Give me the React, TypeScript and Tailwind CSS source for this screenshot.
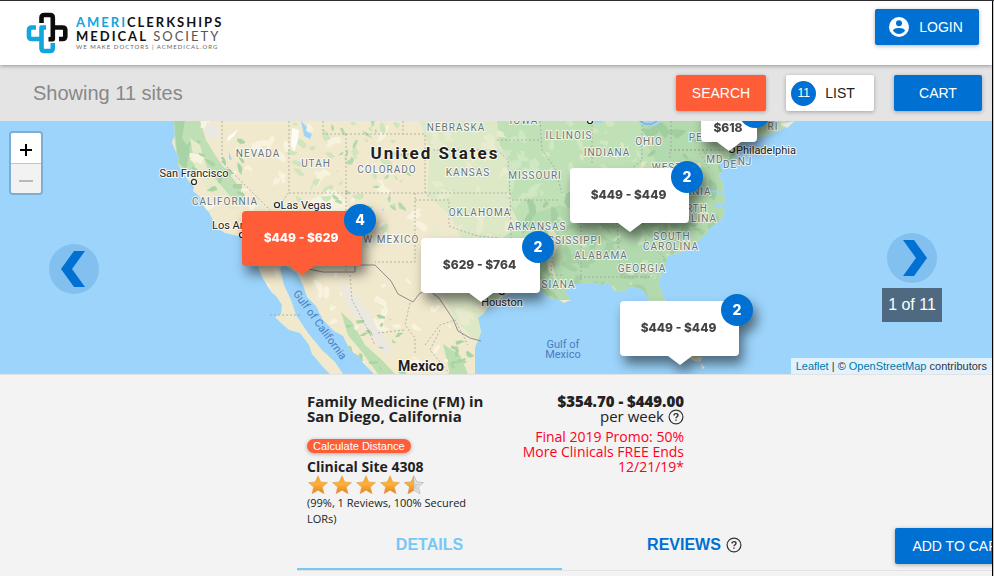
import React from "react";

type Pt = [number, number];

/* Small seeded generator so that the terrain texture is the same on every render. */
function makeRandom(seed: number) {
  let s = seed;
  return () => {
    s = (s * 1664525 + 1013904223) % 4294967296;
    return s / 4294967296;
  };
}

function patches(seed: number, count: number, x: number, y: number, w: number, h: number, size: number) {
  const rnd = makeRandom(seed);
  const out: string[] = [];
  for (let i = 0; i < count; i++) {
    const cx = x + rnd() * w;
    const cy = y + rnd() * h;
    const r = size * (0.4 + rnd());
    const tilt = rnd() * Math.PI;
    const n = 8;
    const pts: Pt[] = [];
    for (let k = 0; k < n; k++) {
      const a = (k / n) * Math.PI * 2;
      const q = r * (0.45 + rnd() * 0.8);
      const px = Math.cos(a) * q;
      const py = Math.sin(a) * q * 0.5;
      pts.push([cx + px * Math.cos(tilt) - py * Math.sin(tilt), cy + px * Math.sin(tilt) + py * Math.cos(tilt)]);
    }
    out.push("M" + pts.map((p) => p[0].toFixed(1) + " " + p[1].toFixed(1)).join("L") + "Z");
  }
  return out.join("");
}

const LAND =
  "M174 121L175 135L172 142L175 150L179 157L178 165L183 173L188 180L194 187L193 191L200 197L202 204L208 211L213 220L217 228L225 233L234 235L242 237L248 246L254 256L262 277L272 293L276 296L282 305L281 314L275 317L281 323L289 330L300 333L309 345L312 354L323 367L330 374L343 374L335 362L322 350L308 333L296 315L291 300L284 285L280 268L284 265L297 273L303 285L307 297L316 306L323 320L334 331L343 336L350 350L358 356L365 365L374 374L475 374L475 348L481 332L478 318L484 313L491 303L500 299L512 292L530 289L541 290L549 298L558 299L564 303L571 300L564 292L570 288L566 286L575 284L586 284L592 282L602 285L608 282L614 290L622 292L632 286L643 290L650 301L657 325L675 352L697 362L701 356L690 345L672 315L665 301L660 288L660 278L666 262L667 256L675 254L688 250L698 241L706 234L710 228L722 219L725 210L721 207L725 202L723 194L724 184L719 176L726 165L735 156L738 146L744 139L757 136L766 134L783 128L785 121Z";

const STATE_LINES =
  "M222 121V162L270 210M289 121V192L281 204V224M289 193H425M346 134V193M346 193V271M323 121V134H425V193M403 121V134M425 150H497M425 193H510M415 193V262H375M415 200H449V226L462 231L478 236L500 238M510 193L511 239M497 150L508 160L510 193M497 140H540M512 200H560M511 239H548M553 245L551 275M548 275H562M581 210V283M616 210L620 270M580 277H655M540 121L542 150L555 168L562 193M592 121V165M642 121V160L632 168M670 158V150H712M640 218L700 206M700 153L710 170M671 121V150H727M645 240L665 258M350 275L352 300L367 328L375 345M410 303L405 325L415 338V355M378 333L405 330M425 345L440 325L455 320L468 345M270 315H300M440 330L430 350L450 374";

const BORDER = "M304 268L323 272H355V265H375L391 281L398 294L413 302L420 293L430 291L439 298L453 319L458 331L470 338L481 341";

type Label = { x: number; y: number; t: string };

const STATES: Label[] = [
  { x: 258, y: 157, t: "NEVADA" },
  { x: 316, y: 167, t: "UTAH" },
  { x: 387, y: 173, t: "COLORADO" },
  { x: 456, y: 131, t: "NEBRASKA" },
  { x: 468, y: 176, t: "KANSAS" },
  { x: 524, y: 124, t: "IOWA" },
  { x: 535, y: 179, t: "MISSOURI" },
  { x: 569, y: 139, t: "ILLINOIS" },
  { x: 607, y: 156, t: "INDIANA" },
  { x: 649, y: 145, t: "OHIO" },
  { x: 225, y: 205, t: "CALIFORNIA" },
  { x: 480, y: 216, t: "OKLAHOMA" },
  { x: 537, y: 230, t: "ARKANSAS" },
  { x: 384, y: 243, t: "NEW MEXICO" },
  { x: 568, y: 244, t: "MISSISSIPPI" },
  { x: 601, y: 259, t: "ALABAMA" },
  { x: 642, y: 272, t: "GEORGIA" },
  { x: 546, y: 288, t: "LOUISIANA" },
  { x: 672, y: 240, t: "SOUTH" },
  { x: 671, y: 250, t: "CAROLINA" },
  { x: 689, y: 212, t: "NORTH" },
  { x: 689, y: 222, t: "CAROLINA" },
  { x: 687, y: 195, t: "VIRGINIA" },
  { x: 667, y: 171, t: "WEST" },
  { x: 715, y: 163, t: "MD" },
  { x: 730, y: 168, t: "DE" },
  { x: 745, y: 165, t: "NJ" },
  { x: 704, y: 141, t: "PENN" },
  { x: 773, y: 130, t: "RI" },
];

function MapArt() {
  return (
    <svg
      className="absolute left-0 top-0 h-[253px] w-[992px]"
      viewBox="0 121 992 253"
      role="img"
      aria-label="Map of the United States and Mexico"
    >
      <defs>
        <clipPath id="land">
          <path d={LAND} />
        </clipPath>
      </defs>
      <path d={LAND} fill="#f1e9cd" />
      <g clipPath="url(#land)">
        <path d="M420 121L430 150L427 195L450 215L462 240L440 290L455 320L480 345L520 300V121Z" fill="#dde8c6" />
        <path
          d="M497 121L500 145L512 165L508 200L520 225L500 240L495 270L480 300L520 300L575 300L640 310L720 380L800 300V121Z"
          fill="#c0e1b6"
        />
        <path
          d="M640 121L650 150L665 180L640 205L590 220L560 205L530 215L545 240L520 270L530 300L700 300L740 200L730 160L700 121Z"
          fill="#b3d9ae"
        />
        <path d="M172 121H200L206 140L215 155L222 165L242 190L246 205L235 205L215 185L200 172L190 178L178 165Z" fill="#bfe0b5" />
        <path d="M174 121H185L182 138L190 150L186 170L178 162Z" fill="#a8d3a4" />
        <path d="M190 138L200 145L208 170L225 190L240 208L230 210L208 190L196 172Z" fill="#e6eac8" />
        <path d="M341 312L352 322L365 345L382 360L395 374H378L362 352L348 335Z" fill="#bcdfb2" />
        <path d="M443 344L460 355L468 374H450Z" fill="#bcdfb2" />
        <path d="M340 278L360 300L380 330L392 350L385 355L365 330L345 300Z" fill="#ebe8df" />
        <path d="M335 190L345 200L352 215L325 222L310 200Z" fill="#f8f3df" />
        <path d="M206 123L220 128L218 138L206 136Z" fill="#e9e8e2" />
        <path d={patches(11, 55, 190, 121, 240, 170, 7)} fill="#f8f3df" />
        <path d={patches(12, 38, 290, 121, 120, 110, 5)} fill="#cfe5bd" />
        <path d={patches(13, 24, 330, 121, 80, 90, 4)} fill="#b5dbad" />
        <path d={patches(14, 20, 178, 125, 70, 80, 5)} fill="#a9d4a5" />
        <path d={patches(15, 34, 270, 280, 190, 94, 6)} fill="#f8f3df" />
        <path d={patches(16, 16, 345, 315, 60, 60, 5)} fill="#a9d4a5" />
        <path d={patches(17, 55, 430, 121, 80, 200, 7)} fill="#e9ebcf" />
        <path d={patches(18, 40, 505, 121, 150, 80, 8)} fill="#cfe7c2" />
        <path d={patches(19, 70, 520, 200, 200, 100, 9)} fill="#a6d0a3" />
        <path d={patches(20, 34, 640, 121, 100, 110, 8)} fill="#a2cd9f" />
        <path d={patches(21, 28, 540, 200, 170, 95, 5)} fill="#c8e4bd" />
        <path d={patches(22, 16, 540, 125, 170, 120, 3)} fill="#e2e8c2" />
        <path d={patches(23, 10, 450, 340, 28, 34, 5)} fill="#a9d4a5" />
        <path d="M550 225L560 240L552 262L556 280L548 270L546 245Z" fill="#dfe6c4" />
        <path d={patches(24, 34, 420, 121, 320, 175, 1)} fill="#9cd4f8" />
        <path d={patches(25, 14, 220, 121, 220, 240, 1)} fill="#9cd4f8" />
      </g>
      <g fill="#9cd4fb">
        <path d="M301 121L307 127L306 131L312 134L310 139L304 136L303 130Z" />
        <path d="M594 121H603L601 123L595 123ZM638 121H662L655 126L646 126L640 124Z" />
        <path d="M722 158L726 166L729 178L727 181L722 172L719 163ZM731 160L735 166L733 170L730 165Z" />
        <path d="M713 206L722 203L724 205L717 208ZM708 190L722 191V193L709 192Z" />
        <path d="M229 152L232 160L229 159Z" />
      </g>
      <path d="M640 121L645 124H652L657 121" fill="none" stroke="#7d9db5" />
      <path d="M292 128L299 130L298 140L294 152L291 145Z" fill="#fdfdf8" />
      <path d="M228 137L238 129L234 136L227 142Z" fill="#fdfdf8" />
      <path d="M744 138L754 133L785 126L780 131L760 137Z" fill="#bfe0b5" />
      <path d="M780 124L795 121L787 128ZM695 358L703 357L700 362ZM701 363L705 368L702 369Z" fill="#ece9d8" />
      <path d={STATE_LINES} fill="none" stroke="#9ba19c" strokeWidth="1" strokeDasharray="2 2" opacity="0.75" />
      <path d={BORDER} fill="none" stroke="#8e8e89" strokeWidth="1" />
      <g fontFamily="Roboto, sans-serif" textAnchor="middle" strokeLinejoin="round" paintOrder="stroke">
        <g fontSize="10" letterSpacing="1" fill="#66757a" stroke="#ffffff" strokeOpacity="0.75" strokeWidth="2">
          {STATES.map((l, i) => (
            <text key={i} x={l.x} y={l.y}>
              {l.t}
            </text>
          ))}
        </g>
        <g fontSize="11" fill="#222222" stroke="#ffffff" strokeOpacity="0.85" strokeWidth="2">
          <text x="194" y="177">San Francisco</text>
          <text x="306" y="209">Las Vegas</text>
          <text x="242" y="229">Los Angeles</text>
          <text x="766" y="154">Philadelphia</text>
          <text x="502" y="306">Houston</text>
        </g>
        <g fill="#ffffff" stroke="#222222" strokeWidth="1.2" paintOrder="normal">
          <circle cx="194" cy="182" r="2.5" />
          <circle cx="277" cy="205" r="2.5" />
          <circle cx="242" cy="235" r="2.5" />
          <circle cx="732" cy="150" r="2.5" />
          <circle cx="502" cy="292" r="2.5" />
          <circle cx="590" cy="121" r="2.5" />
        </g>
        <g fill="#1f1f1f" stroke="#ffffff" strokeOpacity="0.8" strokeWidth="2">
          <text x="435" y="159" fontSize="17" fontWeight="700" letterSpacing="2">
            United States
          </text>
          <text x="421" y="371" fontSize="14" fontWeight="700">
            Mexico
          </text>
        </g>
        <g fontSize="11" fill="#4b7cc0">
          <text x="563" y="348">Gulf of</text>
          <text x="563" y="358">Mexico</text>
          <text transform="translate(317 327) rotate(54)">Gulf of California</text>
        </g>
      </g>
    </svg>
  );
}

type PinProps = { price: string; count: number; place: string; active?: boolean };

function Pin({ price, count, place, active }: PinProps) {
  return (
    <button
      type="button"
      className={
        "absolute flex items-center justify-center rounded pb-px pr-[2px] font-['Inter',sans-serif] text-xs font-extrabold drop-shadow-[4px_8px_6px_rgba(0,0,0,0.5)] " +
        (active ? "bg-[#ff5d38] text-white " : "bg-white text-[#444444] ") +
        place
      }
    >
      {price}
      <span
        className={
          "absolute left-1/2 top-full -translate-x-1/2 border-x-[12px] border-t-[9px] border-x-transparent " +
          (active ? "border-t-[#ff5d38]" : "border-t-white")
        }
      />
      <span className="absolute -right-[14px] -top-[7px] flex size-8 items-center justify-center rounded-full bg-[#0070d2] text-sm text-white">
        {count}
      </span>
    </button>
  );
}

function Help() {
  return (
    <svg className="size-4 shrink-0" viewBox="0 0 16 16" fill="none" stroke="#333333" strokeWidth="1.2" aria-hidden="true">
      <circle cx="8" cy="8" r="6.9" />
      <path d="M6 6.4C6 5.2 6.9 4.6 8 4.6C9.2 4.6 10 5.3 10 6.3C10 7.7 8 7.7 8 9.3M8 10.4V11.8" strokeWidth="1.4" />
    </svg>
  );
}

const STAR = "M10 0.8L12.8 7L19.5 7.6L14.4 12.1L16 18.8L10 15.2L4 18.8L5.6 12.1L0.5 7.6L7.2 7Z";

function Star({ half }: { half?: boolean }) {
  return (
    <svg className="size-5" viewBox="0 0 20 20" aria-hidden="true">
      <defs>
        <linearGradient id="gold" x1="0" y1="0" x2="0" y2="1">
          <stop offset="0" stopColor="#f8a21c" />
          <stop offset="0.45" stopColor="#fcb13a" />
          <stop offset="1" stopColor="#ea7c1c" />
        </linearGradient>
        <clipPath id="leftHalf">
          <rect width="10" height="20" />
        </clipPath>
      </defs>
      {half ? (
        <>
          <path d={STAR} fill="#e4e4e4" stroke="#b9b9b9" strokeWidth="0.8" />
          <path d="M10 4L11.5 9L17 8.5L12.5 11.5L14 16L10 13Z" fill="#cfcfcf" />
          <path d={STAR} fill="url(#gold)" stroke="#d9a566" strokeWidth="0.6" clipPath="url(#leftHalf)" />
        </>
      ) : (
        <path d={STAR} fill="url(#gold)" stroke="#d9a566" strokeWidth="0.6" />
      )}
    </svg>
  );
}

function Logo() {
  return (
    <a href="#home" className="flex items-center gap-2" aria-label="AmeriClerkships Medical Society">
      <svg className="h-[42px] w-[42px]" viewBox="0 0 42 42" fill="none" strokeWidth="4.6" strokeLinejoin="round" aria-hidden="true">
        <path d="M15.500 11V5.800Q15.500 3 18.300 3H24Q26.800 3 26.800 5.800V27.200H22.500" stroke="#0c0c0c" />
        <path d="M26.800 15.500H36.500Q39.300 15.500 39.300 18.300V24.200Q39.300 27 36.500 27H33" stroke="#0c0c0c" />
        <path d="M26.800 31V36.200Q26.800 39 24 39H18.300Q15.500 39 15.500 36.200V15.500H20" stroke="#12a5de" />
        <path d="M10 15.500H5.800Q3 15.500 3 18.300V24.200Q3 27 5.800 27H15.500" stroke="#12a5de" />
      </svg>
      <span className="flex flex-col font-['Lato',sans-serif] text-[13px] leading-[14px] tracking-[2px]">
        <span className="font-bold text-[#111111]">
          <span className="text-[#12a5de]">AMERI</span>CLERKSHIPS
        </span>
        <span className="text-[#555555]">
          <span className="font-bold text-[#111111]">MEDICAL</span> SOCIETY
        </span>
        <span className="text-[6px] leading-[8px] tracking-[1px] text-[#666666]">WE MAKE DOCTORS | ACMEDICAL.ORG</span>
      </span>
    </a>
  );
}

const RAISED = "flex h-9 items-center justify-center rounded-[2px] text-sm shadow-[0_1px_4px_rgba(0,0,0,0.3)] ";

export default function App() {
  return (
    <div className="flex h-screen overflow-hidden border-t border-[#2e2c30] bg-[#c9c9c9] pr-px font-['Liberation_Sans',Arial,sans-serif]">
      <div className="flex min-w-0 flex-1 flex-col overflow-hidden border-r border-black bg-[#f3f3f3]">
        <header className="relative z-10 flex h-16 shrink-0 items-start justify-between bg-white pl-[26px] pr-[13px] shadow-[0_1px_4px_rgba(0,0,0,0.35)]">
          <div className="pt-[11px]">
            <Logo />
          </div>
          <button type="button" className={RAISED + "mt-2 w-[104px] gap-[10px] bg-[#0070d2] pr-[2px] text-white"}>
            <svg className="size-5" viewBox="0 0 20 20" aria-hidden="true">
              <circle cx="10" cy="10" r="10" fill="#ffffff" />
              <circle cx="10" cy="6.200" r="3" fill="#0070d2" />
              <path d="M4 13.500C4 11.600 8 10.900 10 10.900S16 11.600 16 13.500C14.700 15.700 12.500 16.900 10 16.900S5.300 15.700 4 13.500Z" fill="#0070d2" />
            </svg>
            LOGIN
          </button>
        </header>

        <div className="flex h-14 shrink-0 items-center gap-5 bg-[#e4e4e4] pl-[33px] pr-[10px]">
          <h1 className="flex-1 text-xl text-[#888888]">Showing 11 sites</h1>
          <button type="button" className={RAISED + "w-[90px] bg-[#ff5d38] text-white"}>
            SEARCH
          </button>
          <button type="button" className={RAISED + "w-[88px] gap-[9px] bg-white pr-[14px] text-[#222222]"}>
            <span className="flex size-[25px] items-center justify-center rounded-full bg-[#0070d2] text-xs text-white">11</span>
            LIST
          </button>
          <button type="button" className={RAISED + "w-[88px] bg-[#0070d2] text-white"}>
            CART
          </button>
        </div>

        <section className="relative h-[253px] shrink-0 overflow-hidden bg-[#9cd4fb]" aria-label="Clinical site map">
          <MapArt />
          <Pin price="$618" count={2} place="left-[701px] top-[-18px] h-[39px] w-[56px] pt-3" />
          <Pin price="$449 - $449" count={2} place="left-[570px] top-[47px] h-[55px] w-[119px]" />
          <Pin price="$449 - $629" count={4} active place="left-[242px] top-[90px] h-[55px] w-[120px]" />
          <Pin price="$629 - $764" count={2} place="left-[421px] top-[117px] h-[55px] w-[119px]" />
          <Pin price="$449 - $449" count={2} place="left-[620px] top-[180px] h-[55px] w-[119px]" />

          <div className="absolute left-[9px] top-[10px] overflow-hidden rounded border-2 border-[#7daed3]">
            <button type="button" aria-label="Zoom in" className="flex h-[30px] w-[30px] items-center justify-center bg-white pt-1">
              <svg className="size-3" viewBox="0 0 12 12" stroke="#000000" strokeWidth="2" aria-hidden="true">
                <path d="M0 6H12M6 0V12" />
              </svg>
            </button>
            <button
              type="button"
              aria-label="Zoom out"
              className="flex h-[30px] w-[30px] items-center justify-center border-t border-[#c4c4c4] bg-[#f2f2f2] pt-1"
            >
              <svg className="h-3 w-[14px]" viewBox="0 0 14 12" stroke="#b8b8b8" strokeWidth="2" aria-hidden="true">
                <path d="M0 6H14" />
              </svg>
            </button>
          </div>

          <button
            type="button"
            aria-label="Previous site"
            className="absolute left-[49px] top-[123px] flex size-[50px] items-center justify-center rounded-full bg-[#82c0ef] pr-[2px]"
          >
            <svg className="h-9 w-6" viewBox="0 0 24 36" fill="#0070d2" aria-hidden="true">
              <path d="M13 0H24L11 18L24 36H13L0 18Z" />
            </svg>
          </button>
          <div className="absolute right-[50px] top-[112px] flex flex-col items-center gap-[5px]">
            <button
              type="button"
              aria-label="Next site"
              className="flex size-[50px] items-center justify-center rounded-full bg-[#82c0ef] pl-[6px]"
            >
              <svg className="h-9 w-6" viewBox="0 0 24 36" fill="#0070d2" aria-hidden="true">
                <path d="M11 0H0L13 18L0 36H11L24 18Z" />
              </svg>
            </button>
            <span className="flex h-[34px] w-[60px] items-center justify-center bg-[#4f6a80] text-base text-white">1 of 11</span>
          </div>
          <p className="absolute bottom-0 right-0 bg-white/70 px-[5px] text-[11px] leading-4 text-[#333333]">
            <a href="#leaflet" className="text-[#0078a8]">Leaflet</a> | ©{" "}
            <a href="#osm" className="text-[#0078a8]">OpenStreetMap</a> contributors
          </p>
        </section>

        <section className="flex flex-1 flex-col border-t border-[#e2e2e2] pl-[297px] font-['Open_Sans',sans-serif] text-[#222222]">
          <div className="flex gap-2 pl-[10px] pt-[19px]">
            <div className="w-[185px]">
              <h2 className="whitespace-nowrap text-[15px] font-bold leading-[15px]">
                Family Medicine (FM) in
                <br />
                San Diego, California
              </h2>
              <button
                type="button"
                className="mt-[15px] block h-[14px] rounded-full bg-[#ff5d38] px-[6px] font-['Liberation_Sans',Arial,sans-serif] text-[11px] leading-[13px] text-white shadow-[0_1px_4px_rgba(0,0,0,0.3)]"
              >
                Calculate Distance
              </button>
              <p className="mt-[6px] text-sm font-bold leading-4">Clinical Site 4308</p>
              <div className="flex gap-1 pl-px" role="img" aria-label="4.5 out of 5 stars">
                <Star />
                <Star />
                <Star />
                <Star />
                <Star half />
              </div>
              <p className="text-[11px] leading-4">(99%, 1 Reviews, 100% Secured LORs)</p>
            </div>
            <div className="w-[184px] text-right text-[15px] leading-[15px]">
              <p className="font-extrabold">$354.70 - $449.00</p>
              <p className="flex h-[15px] items-center justify-end gap-1">
                per week <Help />
              </p>
              <p className="ml-auto mt-[5px] w-[169px] text-sm leading-[15px] text-[#ff0022]">
                Final 2019 Promo: 50% More Clinicals FREE Ends 12/21/19*
              </p>
            </div>
          </div>
          <nav className="flex h-11 w-[795px] shrink-0 border-b border-[#e2e2e2] font-['Liberation_Sans',Arial,sans-serif] font-bold">
            <button type="button" className="w-[265px] border-b-2 border-[#77c8f5] pb-[6px] text-[#77c8f5]">
              DETAILS
            </button>
            <button type="button" className="flex w-[265px] items-center justify-center gap-[5px] pb-2 text-[#0070d2]">
              REVIEWS <Help />
            </button>
            <div className="flex w-[265px] justify-center pt-px">
              <button type="button" className={RAISED + "w-[129px] whitespace-nowrap bg-[#0070d2] font-normal text-white"}>
                ADD TO CART
              </button>
            </div>
          </nav>
        </section>
      </div>
    </div>
  );
}
